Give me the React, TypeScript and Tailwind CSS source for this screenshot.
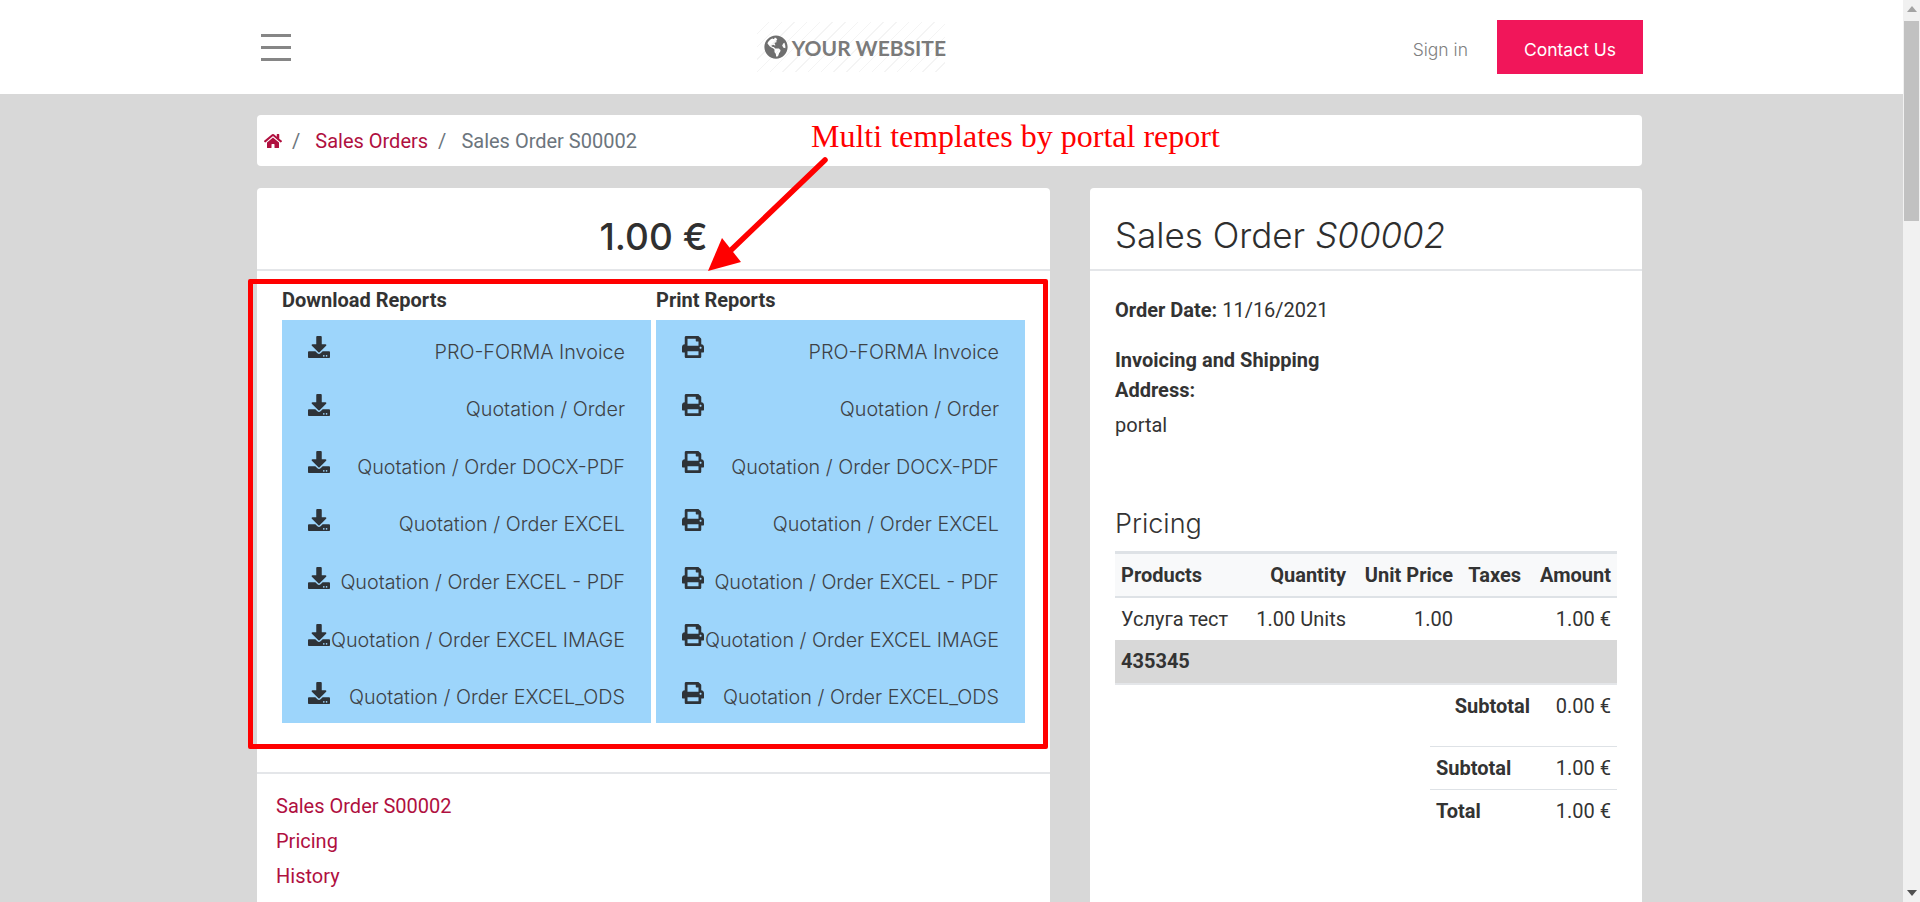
import { FaDownload, FaGlobeAmericas, FaHome, FaPrint } from 'react-icons/fa';

const reports = [
  'PRO-FORMA Invoice',
  'Quotation / Order',
  'Quotation / Order DOCX-PDF',
  'Quotation / Order EXCEL',
  'Quotation / Order EXCEL - PDF',
  'Quotation / Order EXCEL IMAGE',
  'Quotation / Order EXCEL_ODS',
];

function ReportColumn({ title, print }: { title: string; print?: boolean }) {
  return (
    <div className="w-[369px]">
      <h6 className="h-[40px] pt-[8px] text-[20px] leading-[24px] font-bold text-[#333333]">{title}</h6>
      <div className="bg-[#9dd5fb] pr-[26px] pl-[26px]">
        {reports.map((name) => (
          <div key={name} className="flex h-[57.57px] items-center justify-between">
            <span className="-mt-[3px] flex w-[22px] shrink-0 justify-center text-[#2e3338]">
              {print ? <FaPrint size={22} /> : <FaDownload size={22} />}
            </span>
            <span className="mt-[6px] font-['Inter'] text-[19.75px] leading-[24px] font-light whitespace-nowrap text-[#3d4246]">{name}</span>
          </div>
        ))}
      </div>
    </div>
  );
}

function PricingTable() {
  return (
    <div className="mt-[9px] text-[20px] leading-[24px] text-[#333333]">
      <table className="w-[502px] table-fixed border-collapse">
        <colgroup>
          <col className="w-[125px]" />
          <col className="w-[112px]" />
          <col className="w-[107px]" />
          <col className="w-[68px]" />
          <col className="w-[90px]" />
        </colgroup>
        <thead>
          <tr className="h-[44px] border-t-[3px] border-b-[2px] border-[#dee2e6] bg-[#f8f9fa] font-bold">
            <td className="px-[6px]">Products</td>
            <td className="px-[6px] text-right">Quantity</td>
            <td className="px-[6px] text-right whitespace-nowrap">Unit Price</td>
            <td className="px-[6px] text-right">Taxes</td>
            <td className="px-[6px] text-right">Amount</td>
          </tr>
        </thead>
        <tbody>
          <tr className="h-[43px]">
            <td className="px-[6px] whitespace-nowrap">Услуга тест</td>
            <td className="px-[6px] text-right whitespace-nowrap">1.00 Units</td>
            <td className="px-[6px] text-right">1.00</td>
            <td />
            <td className="px-[6px] text-right">1.00 €</td>
          </tr>
          <tr className="h-[44px] border-b-[2px] border-[#e4e6e9] bg-[#d8d8d8] font-bold">
            <td className="px-[6px]" colSpan={5}>435345</td>
          </tr>
          <tr className="h-[43px]">
            <td className="px-[6px]" colSpan={5}>
              <div className="flex justify-end">
                <b>Subtotal</b>
                <span className="w-[81px] text-right">0.00 €</span>
              </div>
            </td>
          </tr>
        </tbody>
      </table>
      <div className="mt-[19px] ml-auto w-[187px]">
        <div className="flex h-[43px] items-center justify-between border-t border-[#dee2e6] px-[6px]">
          <b>Subtotal</b>
          <span>1.00 €</span>
        </div>
        <div className="flex h-[43px] items-center justify-between border-t border-[#dee2e6] px-[6px]">
          <b>Total</b>
          <span>1.00 €</span>
        </div>
      </div>
    </div>
  );
}

export default function App() {
  return (
    <div className="relative flex h-[902px] w-[1920px] overflow-hidden bg-[#d8d8d8] font-['Roboto',sans-serif]">
      <div className="w-[1903px] shrink-0">
        <header className="flex h-[94px] items-center justify-between bg-white pr-[260px] pl-[261px]">
          <div className="flex w-[30px] flex-col gap-[9px]">
            <span className="h-[3px] bg-[#868686]" />
            <span className="h-[3px] bg-[#868686]" />
            <span className="h-[3px] bg-[#868686]" />
          </div>
          <div className="-ml-[2px] flex h-[50px] w-[188px] items-center gap-[4px] bg-[repeating-linear-gradient(135deg,#ffffff_0px,#ffffff_8px,#f4f4f4_8px,#f4f4f4_9px)] pl-[7px]">
            <FaGlobeAmericas size={24} className="shrink-0 text-[#6f6f6f]" />
            <span className="font-['Lato'] text-[21px] leading-none font-bold whitespace-nowrap text-[#7a7a7a]">YOUR WEBSITE</span>
          </div>
          <div className="flex items-center gap-[29px]">
            <span className="pt-[6px] font-['Inter'] text-[17.5px] font-light text-[#808080]">Sign in</span>
            <button type="button" className="h-[54px] w-[146px] bg-[#f1165a] pt-[6px] font-['Inter'] text-[17.5px] font-normal text-white">
              Contact Us
            </button>
          </div>
        </header>

        <main className="pt-[21px] pr-[261px] pl-[257px]">
          <nav className="flex h-[51px] items-center rounded-[4px] bg-white pl-[7px] text-[20px] text-[#6c757d]">
            <FaHome size={18} className="text-[#b0103f]" />
            <span className="mr-[15px] ml-[10px]">/</span>
            <span className="text-[#b0103f]">Sales Orders</span>
            <span className="mr-[15px] ml-[10px]">/</span>
            <span>Sales Order S00002</span>
          </nav>

          <div className="mt-[22px] flex justify-between">
            <section className="w-[793px] rounded-t-[4px] bg-white">
              <div className="flex h-[83px] items-center justify-center border-b-2 border-[#e4e6e9] pt-[16px] font-['Inter'] text-[37px] font-medium text-[#303030]">
                1.00 €
              </div>
              <div className="flex h-[503px] gap-[5px] border-b-2 border-[#e4e6e9] pt-[9px] pl-[25px]">
                <ReportColumn title="Download Reports" />
                <ReportColumn title="Print Reports" print />
              </div>
              <ul className="px-[19px] pt-[15px] text-[20px] leading-[35px] text-[#b0103f]">
                <li>Sales Order S00002</li>
                <li>Pricing</li>
                <li>History</li>
              </ul>
            </section>

            <section className="h-[800px] w-[552px] rounded-t-[4px] bg-white">
              <h2 className="flex h-[83px] items-center gap-[10px] border-b-2 border-[#e4e6e9] pt-[14px] pl-[25px] font-['Inter'] text-[35px] font-light text-[#2e2e2e]">
                Sales Order <em>S00002</em>
              </h2>
              <div className="px-[25px] text-[20px] leading-[30px] text-[#333333]">
                <p className="mt-[24px]"><b>Order Date:</b> 11/16/2021</p>
                <p className="mt-[20px] w-[240px] font-bold">Invoicing and Shipping Address:</p>
                <p className="mt-[5px]">portal</p>
                <h3 className="mt-[66px] font-['Inter'] text-[27px] leading-[36px] font-light">Pricing</h3>
                <PricingTable />
              </div>
            </section>
          </div>
        </main>
      </div>

      <aside className="flex w-[17px] flex-col bg-[#f1f1f1]">
        <span className="mx-auto mt-[6px] h-0 w-0 border-x-[5px] border-b-[6px] border-x-transparent border-b-[#a3a3a3]" />
        <span className="mx-[1px] mt-[9px] h-[200px] bg-[#c1c1c1]" />
        <span className="mx-auto mt-auto mb-[6px] h-0 w-0 border-x-[5px] border-t-[6px] border-x-transparent border-t-[#505050]" />
      </aside>

      {/* annotation drawn on top of the screenshot */}
      <span className="absolute top-[116px] left-[811px] font-['Liberation_Serif',serif] text-[32px] leading-[40px] whitespace-nowrap text-[#ff0000]">
        Multi templates by portal report
      </span>
      <div className="absolute top-[279px] left-[248px] h-[470px] w-[800px] rounded-[2px] border-[5px] border-[#ff0000]" />
      <svg className="absolute top-[155px] left-[700px]" width="140" height="130" viewBox="0 0 140 130">
        <line x1="125" y1="5" x2="28" y2="98" stroke="#ff0000" strokeWidth="5.5" strokeLinecap="round" />
        <polygon points="8,116 22,83 41,107" fill="#ff0000" />
      </svg>
    </div>
  );
}
